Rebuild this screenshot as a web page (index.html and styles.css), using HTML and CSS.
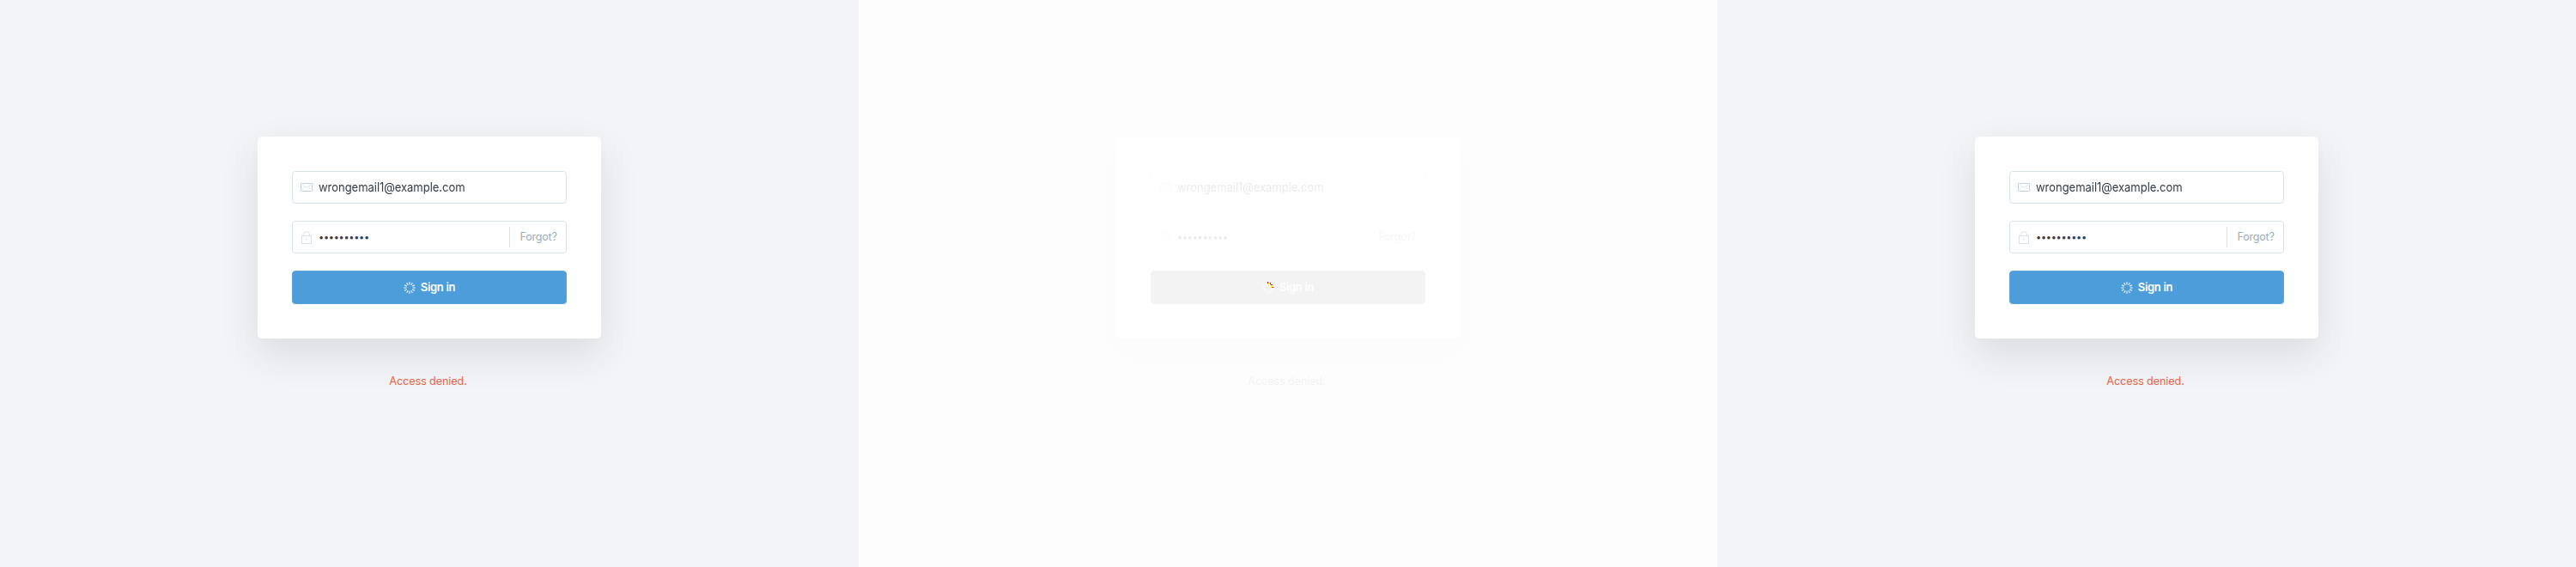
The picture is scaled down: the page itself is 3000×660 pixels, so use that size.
FILE: index.html
```
<!DOCTYPE html>
<html lang="en"><head><meta charset="utf-8"><title>Sign in</title><link rel="stylesheet" href="styles.css"></head>
<body>
<svg class="defs" width="0" height="0">
<symbol id="mail" viewBox="0 0 14 10"><g fill="none" stroke="#bfd1dd"><rect x=".5" y=".5" width="13" height="9" rx=".6"/><path d="M2 1.800L5.500 4.800H8.500L12 1.800M2.500 6.500L4.200 5M11.500 6.500L9.800 5" stroke-width=".6"/></g></symbol>
<symbol id="lock" viewBox="0 0 12 15"><g fill="none" stroke="#d5e2e9"><rect x=".5" y="5.500" width="11" height="9"/><path d="M2.500 5.500V4.200a3.500 3.700 0 0 1 7 0V5.500M6 8.500v2.800"/></g></symbol>
<symbol id="spin" viewBox="-7 -7 14 14"><g stroke="#fff" stroke-width="1.100"><path d="M0-3.700V-6.700M0 3.700V6.700M3.700 0H6.700M-3.700 0H-6.700M1.850-3.200L3.350-5.800M3.200-1.850L5.800-3.350M3.200 1.850L5.800 3.350M1.850 3.200L3.350 5.800M-1.850 3.200L-3.350 5.800M-3.200 1.850L-5.800 3.350M-3.200-1.850L-5.800-3.350M-1.850-3.200L-3.350-5.800"/></g></symbol>
</svg>
<main class="panels">
<section class="panel"><form class="card">
<div class="field"><svg class="mail"><use href="#mail"/></svg><span class="email">wrongemail1@example.com</span></div>
<div class="field"><svg class="lock"><use href="#lock"/></svg><span class="dots">••••••••••</span><a class="forgot">Forgot?</a></div>
<div class="button"><svg class="spinner"><use href="#spin"/></svg><span>Sign in</span></div>
</form><p class="error">Access denied.</p></section>
<section class="compare"><div class="panel faded"><form class="card">
<div class="field"><svg class="mail"><use href="#mail"/></svg><span class="email">wrongemail1@example.com</span></div>
<div class="field"><svg class="lock"><use href="#lock"/></svg><span class="dots">••••••••••</span><a class="forgot">Forgot?</a></div>
<div class="button"><svg class="spinner"><use href="#spin"/></svg><span>Sign in</span></div>
</form><p class="error">Access denied.</p></div>
<svg class="marks" viewBox="0 0 14 14" shape-rendering="crispEdges"><path fill="#f00" d="M6 0h1v2H6zM9 1h1v2H9zM10 3h2v1h-2zM11 6h2v1h-2z"/><path fill="#ff0" d="M6 2h1v1H6zM8 2h1v1H8zM9 3h1v1H9zM10 4h1v2h-1zM10 6h1v1h-1z"/></svg></section>
<section class="panel"><form class="card">
<div class="field"><svg class="mail"><use href="#mail"/></svg><span class="email">wrongemail1@example.com</span></div>
<div class="field"><svg class="lock"><use href="#lock"/></svg><span class="dots">••••••••••</span><a class="forgot">Forgot?</a></div>
<div class="button"><svg class="spinner"><use href="#spin"/></svg><span>Sign in</span></div>
</form><p class="error">Access denied.</p></section>
</main></body></html>
```
FILE: styles.css
```
* { box-sizing: border-box; }
body { margin: 0; background: #fff; font-family: Inter, sans-serif; }
.defs { display: none; }
.panels { display: grid; grid-template-columns: repeat(3, 1000px); height: 660px; }
.panel { height: 660px; background: #f2f4f8; padding-top: 159px; display: flex; flex-direction: column; align-items: center; overflow: hidden; }
.compare { position: relative; }
.faded { background: #ebebeb; filter: grayscale(1) opacity(.105); }
.card { width: 400px; height: 235px; padding: 40px; background: #fff; border-radius: 5px; box-shadow: 0 18px 45px rgba(50,50,50,.12); display: flex; flex-direction: column; }
.faded .card { box-shadow: 0 18px 40px rgba(50,50,50,.07); }
.field { height: 38px; flex: none; margin-bottom: 20px; border: 1px solid #d7e3ea; border-radius: 4px; display: flex; align-items: center; padding-left: 9px; color: #343f47; }
.mail { width: 14px; height: 10px; margin-right: 7px; }
.lock { width: 12px; height: 15px; margin: 0 8px 0 1px; }
.email { font-size: 14.500px; letter-spacing: -.05px; transform: scaleX(.898); transform-origin: left; padding-bottom: 2px; }
.dots { font-size: 11px; letter-spacing: -.3px; padding-bottom: 1px; }
.forgot { margin-left: auto; width: 66px; height: 24px; border-left: 1px solid #d7e3ea; font-size: 12.500px; letter-spacing: -.2px; line-height: 23px; padding-left: 11.500px; color: #9badb8; }
.button { height: 39px; background: #4d9ddb; border: 1px solid #57a6df; border-radius: 4px; color: #fff; display: flex; align-items: center; justify-content: center; font-size: 13px; letter-spacing: -.3px; font-weight: 600; }
.spinner { width: 14px; height: 14px; margin-right: 6px; }
.button span { padding-bottom: 1px; }
.error { margin: 41px 3px 0 0; font-size: 12.700px; letter-spacing: -.12px; line-height: 18px; color: #e26548; }
.marks { position: absolute; left: 470px; top: 328px; width: 14px; height: 14px; }
```
